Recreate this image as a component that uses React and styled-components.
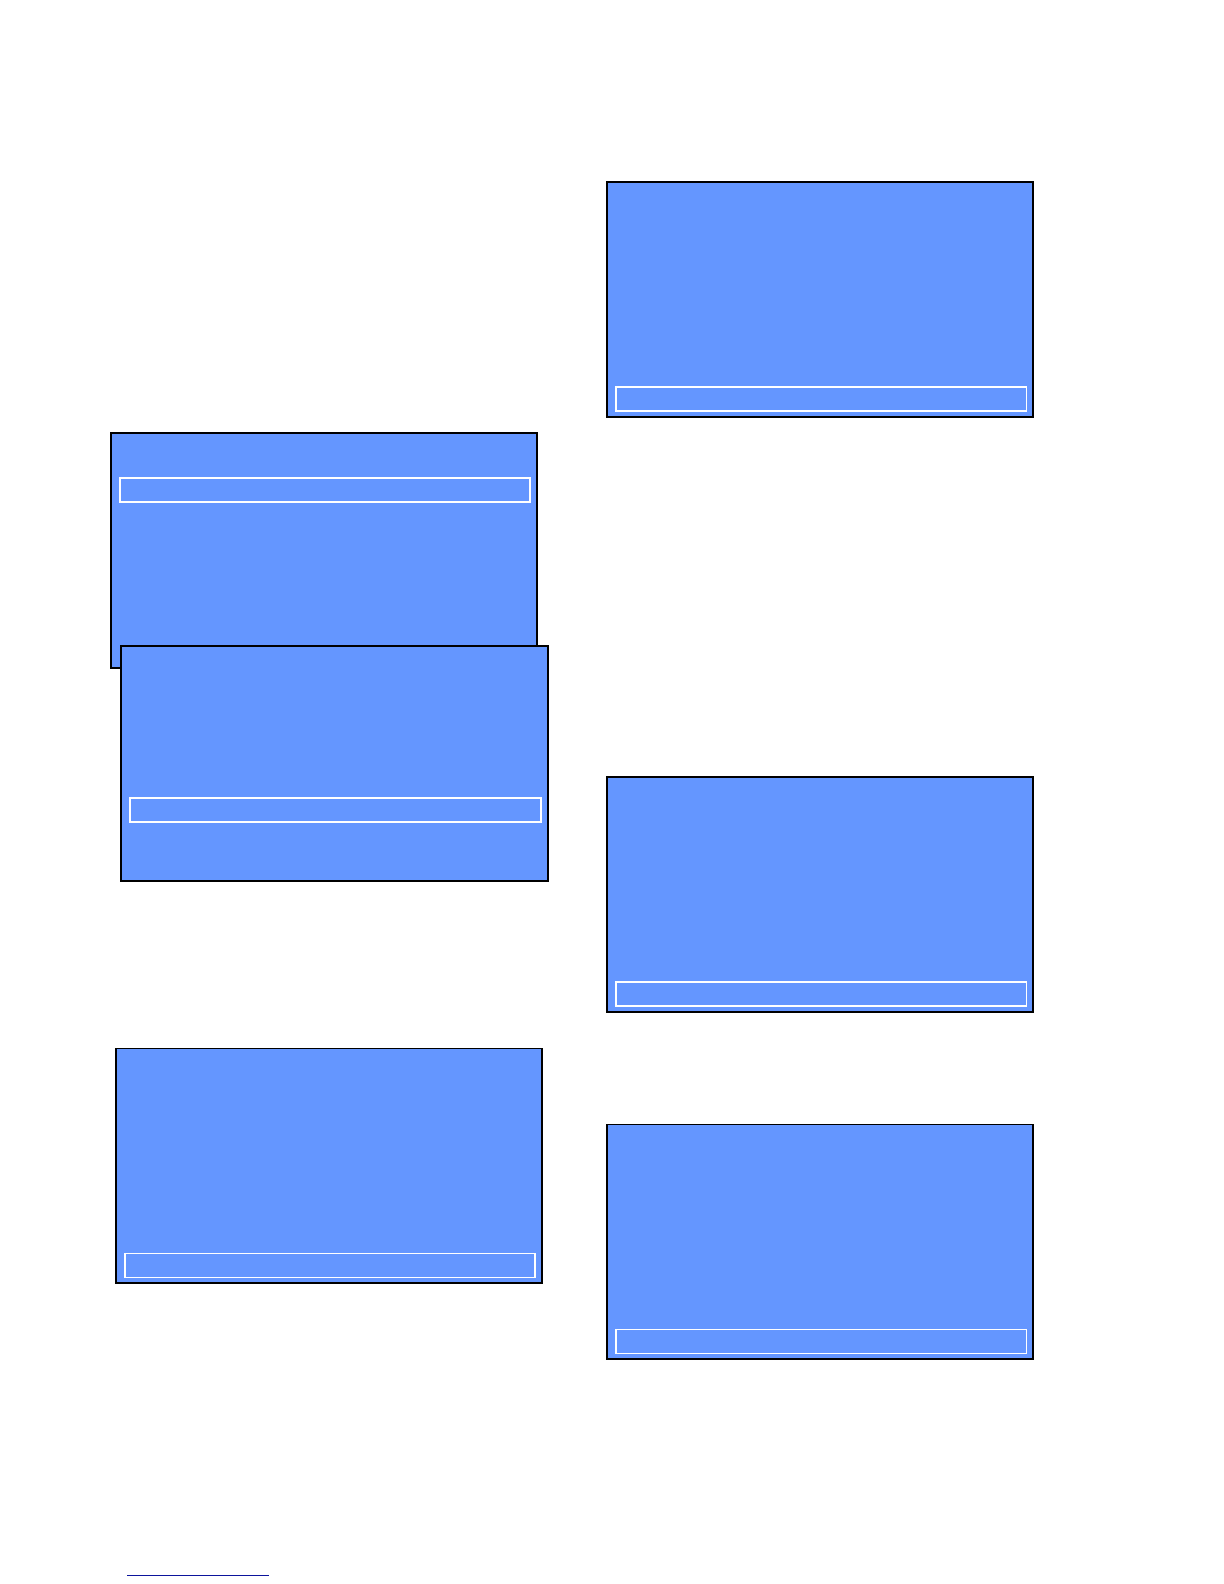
import React from 'react'
import styled, { createGlobalStyle } from 'styled-components'

const GlobalStyle = createGlobalStyle`
  * {
    box-sizing: border-box;
  }

  body {
    margin: 0;
    background: #ffffff;
    font-family: 'Liberation Sans', Arial, sans-serif;
  }
`

const Page = styled.div`
  padding: 181px 190px 8px 110px;
`

const Columns = styled.main`
  display: grid;
  grid-template-columns: 439fr 428fr;
  column-gap: 57px;
`

const Column = styled.div`
  display: flex;
  flex-direction: column;
  padding-top: ${({ $top }) => $top || 0}px;
`

const Screen = styled.section`
  min-height: ${({ $thin }) => ($thin ? 236 : 237)}px;
  margin-top: ${({ $gap }) => $gap || 0}px;
  margin-left: ${({ $left }) => $left || 0}px;
  margin-right: ${({ $right }) => $right || 0}px;
  padding: ${({ $offset }) => $offset}px 5px 4px 7px;
  border: 2px solid #000000;
  border-top-width: ${({ $thin }) => ($thin ? 1 : 2)}px;
  background: #6496ff;
`

const Selection = styled.div`
  height: ${({ $thin }) => ($thin ? 25 : 26)}px;
  border: solid #ffffff;
  border-width: ${({ $thin }) => ($thin ? '1px 2px' : '2px')};
  border-right-width: ${({ $slim }) => ($slim ? 1 : 2)}px;
`

const Footer = styled.footer`
  display: flex;
  margin-top: 214px;
  padding-left: 17px;
`

const FooterLink = styled.a`
  width: 142px;
  height: 2px;
  border-bottom: 1px solid #0c149c;
`

const MenuScreen = ({ thin, slim, offset, ...place }) => (
  <Screen $thin={thin} $offset={offset} $gap={place.gap} $left={place.left} $right={place.right}>
    <Selection $thin={thin} $slim={slim} />
  </Screen>
)

const App = () => (
  <>
    <GlobalStyle />
    <Page>
      <Columns>
        <Column $top={251}>
          <MenuScreen offset={43} right={11} />
          {/* second screen overlaps the bottom of the first one */}
          <MenuScreen offset={150} gap={-24} left={10} />
          <MenuScreen offset={204} gap={166} left={5} right={6} thin />
        </Column>
        <Column>
          <MenuScreen offset={203} slim />
          <MenuScreen offset={203} gap={358} slim />
          <MenuScreen offset={204} gap={111} thin slim />
        </Column>
      </Columns>
      <Footer>
        <FooterLink href="#" />
      </Footer>
    </Page>
  </>
)

export default App
